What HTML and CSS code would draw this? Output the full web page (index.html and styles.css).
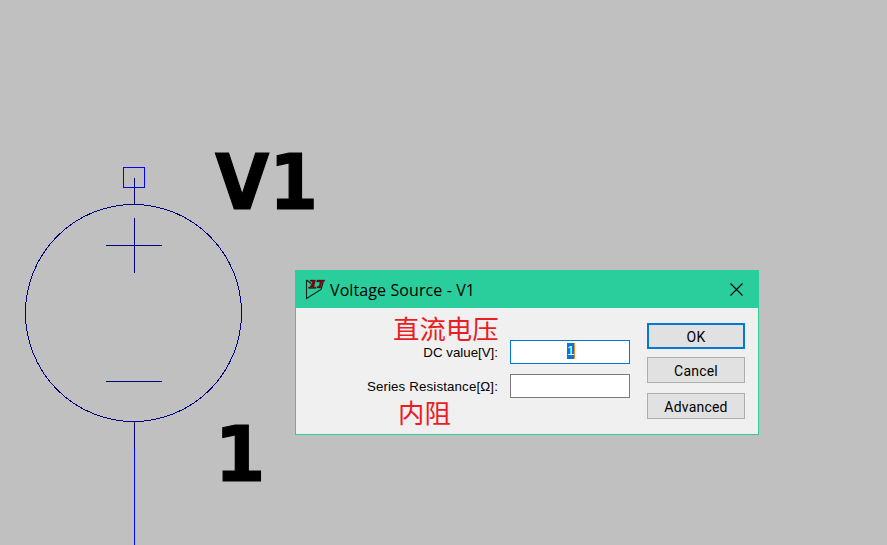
FILE: index.html
```html
<!DOCTYPE html>
<html lang="zh-CN">
<head>
<meta charset="utf-8">
<title>Voltage Source - V1</title>
<link rel="stylesheet" href="styles.css">
</head>
<body>
<main class="schematic">
  <svg class="drawing" width="887" height="545" viewBox="0 0 887 545" shape-rendering="crispEdges">
    <rect class="terminal" x="123.5" y="167.5" width="21" height="20"/>
    <path class="symbol" d="M134.500 178V204M134.500 218V273M106 245.500H162M106 381.500H162M134.500 422V449"/>
    <ellipse class="symbol" cx="133.500" cy="313" rx="108" ry="108.500"/>
    <path class="wire" d="M134.500 449V545"/>
    <text class="label" x="215" y="208.500" textLength="103" lengthAdjust="spacingAndGlyphs">V1</text>
    <text class="label" x="214.500" y="480.500" textLength="51" lengthAdjust="spacingAndGlyphs">1</text>
  </svg>
  <section class="dialog">
    <header class="titlebar">
      <svg class="app-icon" width="21" height="21" viewBox="0 0 21 21">
        <path d="M1.500 1V19.500L16 10.500L18 4M1.500 1L6 4.500" fill="none" stroke="#082018" stroke-width="1.100"/>
        <path d="M5 1H10.500L9 8H11V9.500H3.500V8H5L7.500 3L5 2ZM12 1H20L18.500 3.500H17L15.500 9H12V7.500L14 7L15 3H11.500Z" fill="#7d0808" stroke="#260b08" stroke-width=".3"/>
      </svg>
      <h1 class="title">Voltage Source - V1</h1>
      <svg class="close" width="13" height="13" viewBox="0 0 13 13"><path d="M.5 .5L12.500 12.500M12.500 .5L.5 12.500"/></svg>
    </header>
    <div class="content">
      <div class="fields">
        <p class="note note-voltage">直流电压</p>
        <div class="field"><label class="caption">DC value[V]:</label><div class="input focused"><span class="selection">1</span></div></div>
        <div class="field"><label class="caption caption-wide">Series Resistance[Ω]:</label><div class="input"></div></div>
        <p class="note note-resistance">内阻</p>
      </div>
      <div class="actions">
        <button class="button primary">OK</button>
        <button class="button">Cancel</button>
        <button class="button advanced">Advanced</button>
      </div>
    </div>
  </section>
</main>
</body>
</html>
```

FILE: styles.css
```css
* { box-sizing: border-box; }
body { margin: 0; background: #c0c0c0; overflow: hidden; }
.schematic { position: relative; width: 887px; height: 545px; }
.drawing { display: block; }
.terminal, .wire { fill: none; stroke: #0000ff; }
.symbol { fill: none; stroke: #000080; }
.label { font: bold 77px "DejaVu Sans", sans-serif; fill: #000; stroke: #000; stroke-width: 1.2; }
.dialog {
  position: absolute; left: 295px; top: 270px; width: 464px; height: 165px;
  background: #f0f0f0; border: 1px solid #2ace9c;
  font: 13.3px/16px "Liberation Sans", sans-serif; color: #000;
}
.titlebar { display: flex; align-items: center; height: 37px; padding: 0 15px 0 9px; background: #2ace9c; }
.title { margin: 1px 0 0 4px; font: 16px/20px "Open Sans", sans-serif; letter-spacing: .1px; flex: 1; white-space: nowrap; }
.close { stroke: #000; stroke-width: 1.1; fill: none; }
.content { display: flex; justify-content: space-between; padding: 15px 13px 0 0; }
.fields { display: flex; flex-direction: column; width: 334px; }
.note { margin: 0; color: #ed1c24; font: 26.4px/26px "Noto Sans CJK SC", sans-serif; white-space: nowrap; }
.note-voltage { height: 17px; padding-left: 97px; line-height: 9px; }
.field { display: flex; justify-content: flex-end; align-items: center; gap: 12px; height: 24px; margin-bottom: 10px; }
.caption { padding-top: 2px; }
.caption-wide { letter-spacing: .14px; }
.input { width: 120px; height: 24px; border: 1px solid #7a7a7a; background: #fff; display: flex; justify-content: center; padding: 2px 0 0 2px; }
.focused { border-color: #0078d7; }
.selection { height: 16px; width: 8px; background: #0078d7; color: #fff; border-right: 1px solid #ff8728; }
.note-resistance { padding-left: 102px; line-height: 7px; }
.actions { display: flex; flex-direction: column; width: 98px; }
.button { width: 98px; height: 26px; margin: 0 0 8px; padding: 1px 0 0; border: 1px solid #adadad; border-radius: 0; background: #e1e1e1; font: 14px/18px Roboto, sans-serif; letter-spacing: .2px; color: #000; }
.primary { border: 2px solid #0078d7; }
.advanced { margin-top: 2px; }
```
